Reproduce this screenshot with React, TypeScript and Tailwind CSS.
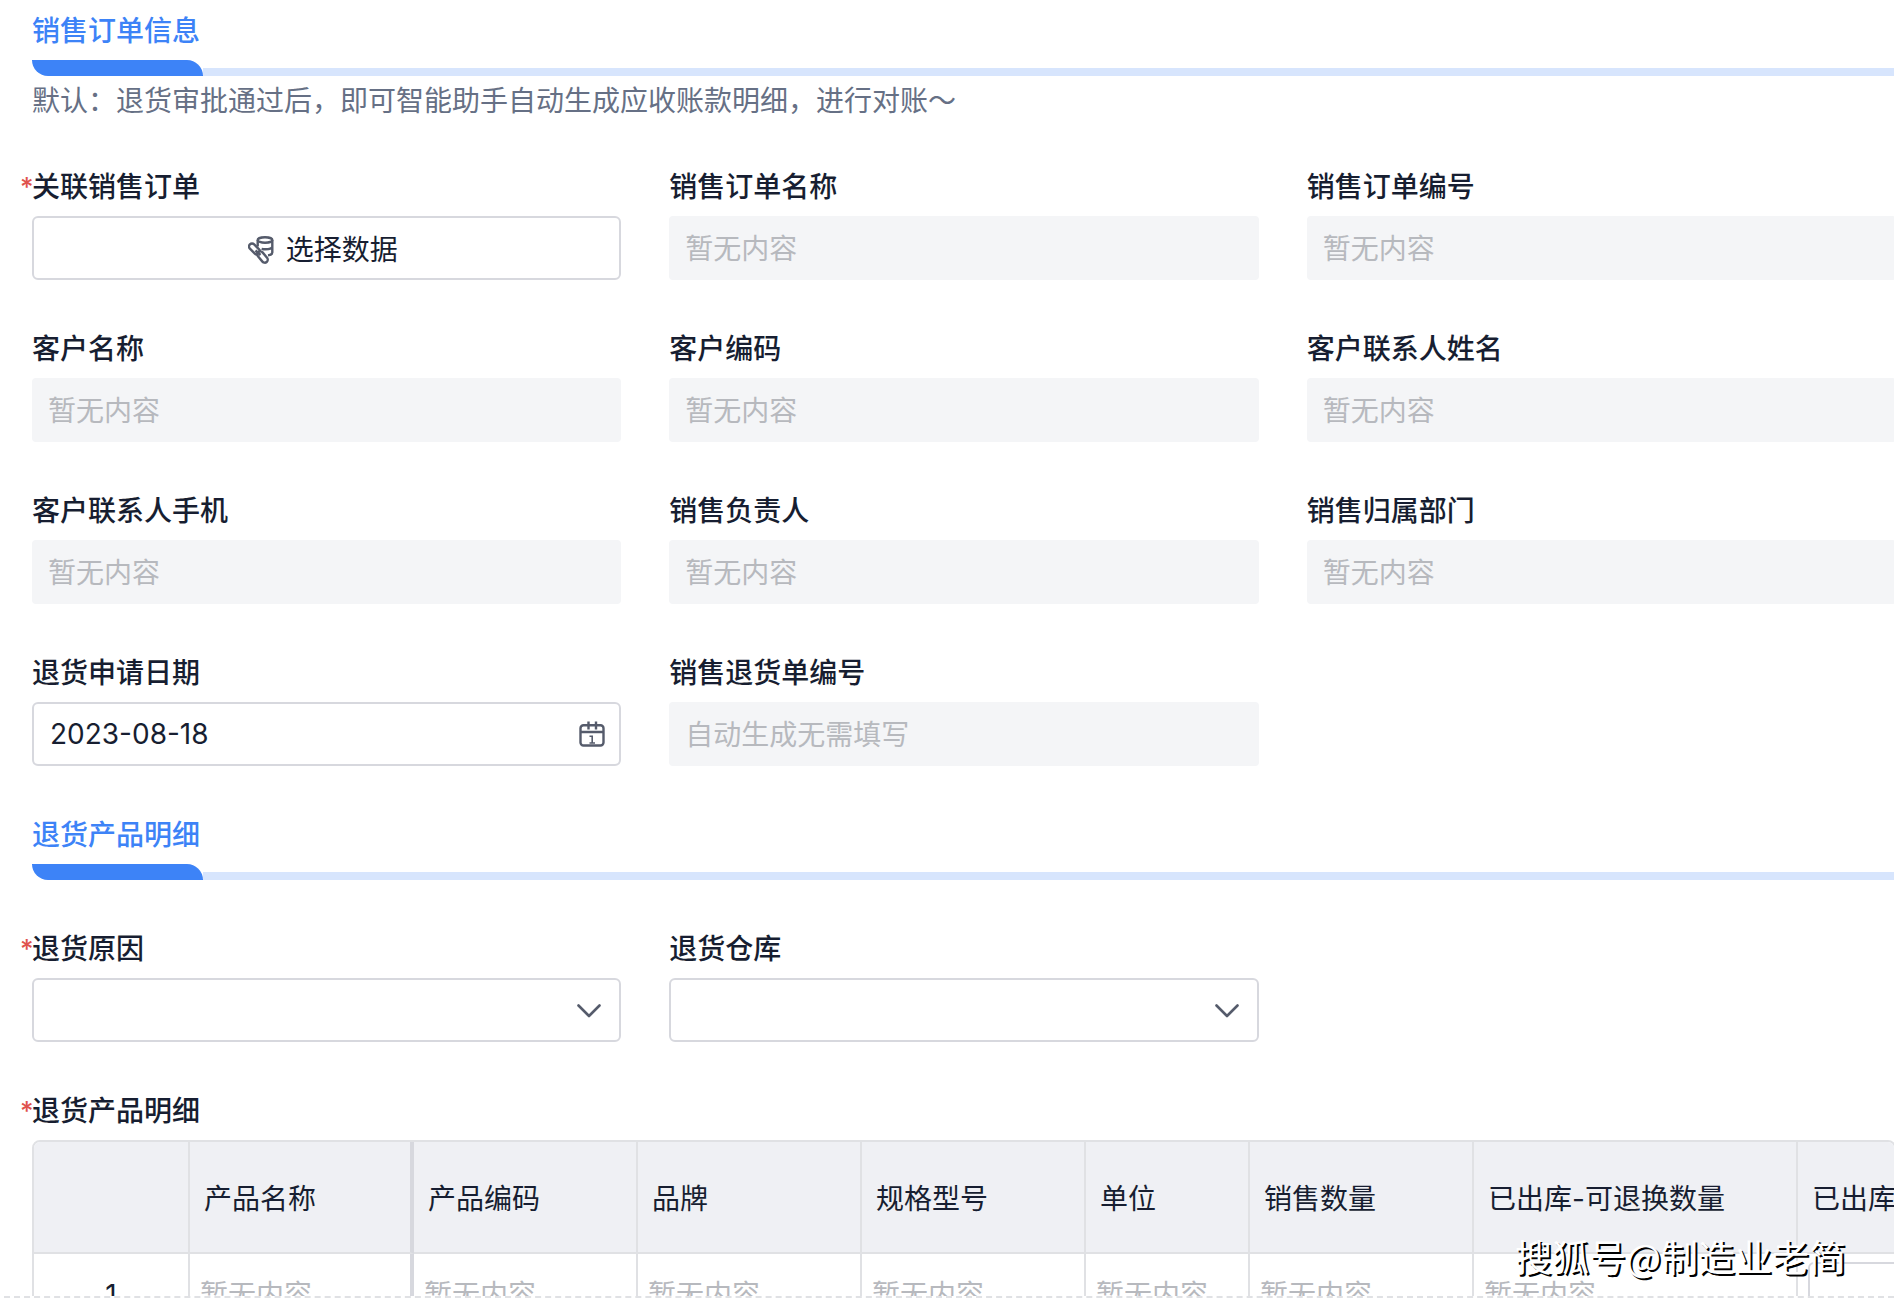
import type { ReactNode } from "react";

const EMPTY = "暂无内容";

const columns = [
    { title: "产品名称", width: "w-[224px]", border: "border-r-4 border-r-[#d7d8de]" },
    { title: "产品编码", width: "w-[224px]", border: "border-r-2" },
    { title: "品牌", width: "w-[224px]", border: "border-r-2" },
    { title: "规格型号", width: "w-[224px]", border: "border-r-2" },
    { title: "单位", width: "w-[164px]", border: "border-r-2" },
    { title: "销售数量", width: "w-[224px]", border: "border-r-2" },
    { title: "已出库-可退换数量", width: "w-[324px]", border: "border-r-2" },
];

function LinkDataIcon() {
    return (
        <svg viewBox="0 0 26 28" className="w-[26px] h-7" fill="none" stroke="#555b6b" strokeWidth="2.4">
            <ellipse cx="17" cy="4" rx="7.3" ry="2.8" />
            <path d="M9.700 4v6.500M24.300 4v12.500c0 1.500-1.600 2.500-4.300 2.900M24.300 10.500c0 1.600-3 2.800-6.800 2.800-1.500 0-2.800-.2-3.900-.5" />
            <rect x="-6.500" y="-3" width="13" height="6" rx="3" transform="translate(6.500 13) rotate(45)" />
            <rect x="-6.500" y="-3" width="13" height="6" rx="3" fill="#fff" transform="translate(14.500 21) rotate(50)" />
            <path d="M7.500 14.500l5 4.500" />
        </svg>
    );
}

function CalendarIcon() {
    return (
        <svg viewBox="0 0 26 26" className="w-[26px] h-[26px]" fill="none" stroke="#555b6b" strokeWidth="2.4">
            <rect x="1.500" y="4.200" width="23" height="20.300" rx="3" />
            <path d="M1.500 11h23M9.500 .5v8M17 .5v8" />
            <path d="M10.500 15.200h2.700v7M10.500 22h5.500" strokeWidth="1.600" />
        </svg>
    );
}

function ChevronIcon() {
    return (
        <svg viewBox="0 0 24 14" className="w-6 h-[14px]" fill="none" stroke="#555b6b" strokeWidth="2.6">
            <path d="M1.500 1.500L12 12 22.500 1.500" strokeLinecap="round" strokeLinejoin="round" />
        </svg>
    );
}

function SectionTitle({ title }: { title: string }) {
    return (
        <div>
            <h2 className="h-[60px] pt-2 leading-[46px] font-medium text-[#3d83f7]">{title}</h2>
            <div className="flex items-end">
                <div className="w-[171px] h-4 bg-[#3d83f7] rounded-tr-2xl rounded-bl-2xl" />
                <div className="flex-1 h-2 bg-[#d7e5fd]" />
            </div>
        </div>
    );
}

function FieldLabel({ id, label, required }: { id?: string; label: string; required?: boolean }) {
    return (
        <label htmlFor={id} className="relative block h-[54px] leading-[50px] font-medium">
            {required && <span className="absolute -left-3 text-[#e0524c] text-[26px] leading-[50px]">*</span>}
            {label}
        </label>
    );
}

function Field({ id, label, required, children }: { id: string; label: string; required?: boolean; children: ReactNode }) {
    return (
        <div>
            <FieldLabel id={id} label={label} required={required} />
            {children}
        </div>
    );
}

function ReadonlyField({ id, label, placeholder = EMPTY }: { id: string; label: string; placeholder?: string }) {
    return (
        <Field id={id} label={label}>
            <input
                id={id}
                type="text"
                readOnly
                placeholder={placeholder}
                className="block w-full h-16 px-4 pt-0.5 rounded bg-[#f4f5f7] placeholder:text-[#b7b9be]"
            />
        </Field>
    );
}

function SelectField({ id, label, required }: { id: string; label: string; required?: boolean }) {
    return (
        <Field id={id} label={label} required={required}>
            <div className="relative">
                <select
                    id={id}
                    className="block w-full h-16 px-4 bg-white border-2 border-[#d7d8de] rounded-md appearance-none"
                />
                <div className="absolute inset-y-0 flex items-center pt-0.5 pointer-events-none right-5">
                    <ChevronIcon />
                </div>
            </div>
        </Field>
    );
}

function ProductTable() {
    return (
        <div className="overflow-hidden border-2 border-[#e0e1e4] rounded-lg">
            <table className="w-full border-separate table-fixed border-spacing-0" aria-labelledby="products-label">
                <thead>
                    <tr className="h-[112px] bg-[#eff0f4] text-left">
                        <th className="w-[156px] border-r-2 border-b-2 border-[#e0e1e4]" />
                        {columns.map((col) => (
                            <th
                                key={col.title}
                                className={`${col.width} ${col.border} px-[14px] pt-1 border-b-2 border-[#e0e1e4] font-normal whitespace-nowrap`}
                            >
                                {col.title}
                            </th>
                        ))}
                        <th className="px-[14px] pt-1 border-b-2 border-[#e0e1e4] font-normal whitespace-nowrap overflow-hidden">
                            已出库
                        </th>
                    </tr>
                </thead>
                <tbody>
                    <tr className="h-20">
                        <td className="pt-0.5 text-center border-r-2 border-[#e0e1e4]">1</td>
                        {columns.map((col) => (
                            <td key={col.title} className={`${col.border} px-[10px] pt-0.5 border-[#e0e1e4] text-[#b7b9be]`}>
                                {EMPTY}
                            </td>
                        ))}
                        <td className="py-2 pl-[10px] overflow-hidden">
                            <input
                                type="text"
                                aria-label="已出库"
                                className="block w-[204px] h-16 px-4 border-2 border-[#d7d8de] rounded-md"
                            />
                        </td>
                    </tr>
                </tbody>
            </table>
        </div>
    );
}

export default function App() {
    return (
        <main className="relative flex flex-col h-screen overflow-hidden bg-white text-[#171e31] text-[28px] font-[Inter,'Noto_Sans_CJK_SC',sans-serif]">
            <div className="flex-1 min-h-0 pl-8 overflow-hidden">
                <div className="-mr-0.5">
                    <SectionTitle title="销售订单信息" />
                    <p className="h-[86px] pt-1 leading-[42px] text-[#667085]">
                        默认：退货审批通过后，即可智能助手自动生成应收账款明细，进行对账～
                    </p>

                    <div className="grid grid-cols-3 gap-x-12 gap-y-11">
                        <Field id="order" label="关联销售订单" required>
                            <button
                                id="order"
                                type="button"
                                className="flex items-center justify-center w-full h-16 gap-3 pt-1 pr-2 border-2 border-[#d7d8de] rounded-md"
                            >
                                <LinkDataIcon />
                                选择数据
                            </button>
                        </Field>
                        <ReadonlyField id="order-name" label="销售订单名称" />
                        <ReadonlyField id="order-no" label="销售订单编号" />
                        <ReadonlyField id="customer-name" label="客户名称" />
                        <ReadonlyField id="customer-code" label="客户编码" />
                        <ReadonlyField id="contact-name" label="客户联系人姓名" />
                        <ReadonlyField id="contact-phone" label="客户联系人手机" />
                        <ReadonlyField id="sales-owner" label="销售负责人" />
                        <ReadonlyField id="sales-dept" label="销售归属部门" />
                        <Field id="return-date" label="退货申请日期">
                            <div className="relative">
                                <input
                                    id="return-date"
                                    type="text"
                                    defaultValue="2023-08-18"
                                    className="block w-full h-16 px-4 border-2 border-[#d7d8de] rounded-md"
                                />
                                <div className="absolute inset-y-0 flex items-center pointer-events-none right-4">
                                    <CalendarIcon />
                                </div>
                            </div>
                        </Field>
                        <ReadonlyField id="return-no" label="销售退货单编号" placeholder="自动生成无需填写" />
                    </div>

                    <div className="pt-[38px] pb-11">
                        <SectionTitle title="退货产品明细" />
                    </div>

                    <div className="grid grid-cols-3 gap-x-12 pb-11">
                        <SelectField id="reason" label="退货原因" required />
                        <SelectField id="warehouse" label="退货仓库" />
                    </div>

                    <div id="products-label">
                        <FieldLabel label="退货产品明细" required />
                    </div>
                    <ProductTable />
                </div>
            </div>
            <div className="ml-1 border-b-2 border-dashed border-[#e0e1e4]" />

            <div className="absolute bottom-4 right-12 text-[37px] leading-[52px] text-white font-['Noto_Sans_CJK_SC',sans-serif] [text-shadow:2px_2px_0_#000]">
                搜狐号@制造业老简
            </div>
        </main>
    );
}
